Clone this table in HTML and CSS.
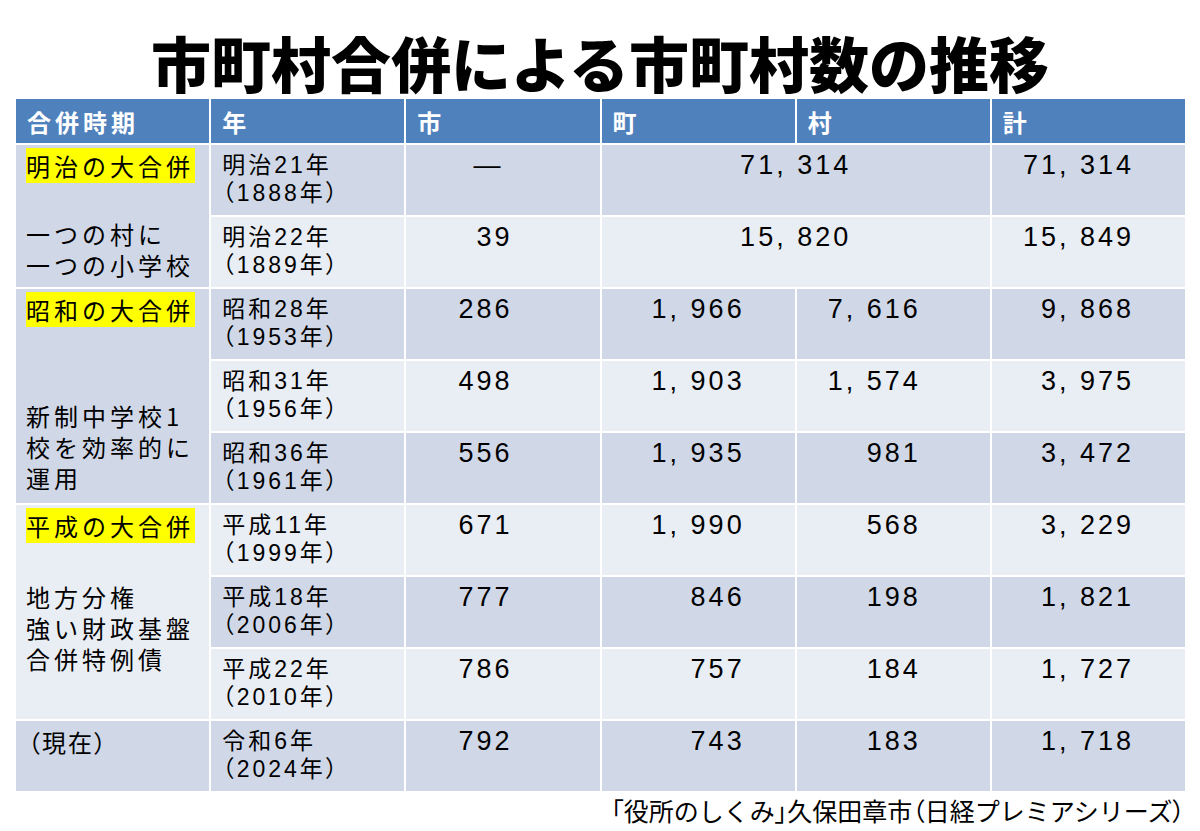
FILE: index.html
```html
<!DOCTYPE html>
<html lang="ja">
<head>
<meta charset="utf-8">
<title>市町村合併による市町村数の推移</title>
<link rel="stylesheet" href="styles.css">
</head>
<body>
<h1 class="title">市町村合併による市町村数の推移</h1>
<div class="table">
  <div class="th">合併時期</div>
  <div class="th">年</div>
  <div class="th">市</div>
  <div class="th">町</div>
  <div class="th">村</div>
  <div class="th">計</div>

  <div class="period dk span2"><span class="hl">明治の大合併</span><div class="desc d1">一つの村に<br>一つの小学校</div></div>
  <div class="year dk">明治21年<br>（1888年）</div>
  <div class="num c3 dk dash">—</div>
  <div class="num merged dk">71, 314</div>
  <div class="num c6 dk">71, 314</div>

  <div class="year lt">明治22年<br>（1889年）</div>
  <div class="num c3 lt">39</div>
  <div class="num merged lt">15, 820</div>
  <div class="num c6 lt">15, 849</div>

  <div class="period dk span3"><span class="hl">昭和の大合併</span><div class="desc d2">新制中学校1<br>校を効率的に<br>運用</div></div>
  <div class="year dk">昭和28年<br>（1953年）</div>
  <div class="num c3 dk">286</div>
  <div class="num c4 dk">1, 966</div>
  <div class="num c5 dk">7, 616</div>
  <div class="num c6 dk">9, 868</div>

  <div class="year lt">昭和31年<br>（1956年）</div>
  <div class="num c3 lt">498</div>
  <div class="num c4 lt">1, 903</div>
  <div class="num c5 lt">1, 574</div>
  <div class="num c6 lt">3, 975</div>

  <div class="year dk">昭和36年<br>（1961年）</div>
  <div class="num c3 dk">556</div>
  <div class="num c4 dk">1, 935</div>
  <div class="num c5 dk">981</div>
  <div class="num c6 dk">3, 472</div>

  <div class="period lt span3"><span class="hl">平成の大合併</span><div class="desc d3">地方分権<br>強い財政基盤<br>合併特例債</div></div>
  <div class="year lt">平成11年<br>（1999年）</div>
  <div class="num c3 lt">671</div>
  <div class="num c4 lt">1, 990</div>
  <div class="num c5 lt">568</div>
  <div class="num c6 lt">3, 229</div>

  <div class="year dk">平成18年<br>（2006年）</div>
  <div class="num c3 dk">777</div>
  <div class="num c4 dk">846</div>
  <div class="num c5 dk">198</div>
  <div class="num c6 dk">1, 821</div>

  <div class="year lt">平成22年<br>（2010年）</div>
  <div class="num c3 lt">786</div>
  <div class="num c4 lt">757</div>
  <div class="num c5 lt">184</div>
  <div class="num c6 lt">1, 727</div>

  <div class="period dk now">（現在）</div>
  <div class="year dk">令和6年<br>（2024年）</div>
  <div class="num c3 dk">792</div>
  <div class="num c4 dk">743</div>
  <div class="num c5 dk">183</div>
  <div class="num c6 dk">1, 718</div>
</div>
<p class="source"><span class="p">「</span>役所のしくみ<span class="p">」</span>久保田章市<span class="p">（</span>日経プレミアシリーズ<span class="p">）</span></p>
</body>
</html>
```

FILE: styles.css
```css
html, body {
  margin: 0;
  padding: 0;
  background: #ffffff;
}

body {
  width: 1200px;
  height: 831px;
  overflow: hidden;
  color: #000;
  font-family: "Liberation Sans", "Noto Sans CJK JP", sans-serif;
}

.title {
  margin: 0;
  padding-top: 32px;
  height: 60px;
  line-height: 60px;
  margin-bottom: 7px;
  text-align: center;
  font-family: "Noto Sans CJK JP", sans-serif;
  font-weight: 900;
  font-size: 60px;
  letter-spacing: 0;
  color: #000;
}

.table {
  margin-left: 16px;
  width: 1169px;
  display: grid;
  grid-template-columns: repeat(6, 1fr);
  grid-template-rows: 44px repeat(9, 70px);
  column-gap: 2px;
  row-gap: 2px;
}

.th {
  background: #4f81bd;
  color: #fff;
  font-family: "Noto Sans CJK JP", sans-serif;
  font-weight: 700;
  font-size: 24px;
  letter-spacing: 4px;
  padding-left: 11px;
  display: flex;
  align-items: center;
}

.dk { background: #d0d8e8; }
.lt { background: #e9edf4; }

.span2 { grid-row: span 2; }
.span3 { grid-row: span 3; }

.period {
  padding: 5px 0 0 10px;
  font-family: "Noto Sans CJK JP", sans-serif;
  font-size: 24px;
  letter-spacing: 4px;
  line-height: 31px;
}

.hl {
  background: #ffff00;
  padding-right: 1px;
}

.desc { line-height: 31px; }
.d1 { margin-top: 37px; }
.d2 { margin-top: 75px; }
.d3 { margin-top: 40px; }

.now {
  padding-left: 12px;
  letter-spacing: 2px;
  font-feature-settings: "palt";
}

.year {
  padding: 6px 0 0 11px;
  font-size: 23px;
  line-height: 28px;
  letter-spacing: 3px;
  font-feature-settings: "palt";
}

.num {
  padding-top: 6px;
  font-size: 27px;
  line-height: 28px;
  letter-spacing: 3px;
  text-align: right;
}

.c3 { padding-right: 87px; }
.dash { padding-right: 96px; }
.c4 { padding-right: 50px; }
.c5 { padding-right: 69px; }
.c6 { padding-right: 51px; }

.merged {
  grid-column: span 2;
  text-align: center;
}

.source {
  margin: 5px 15px 0 0;
  text-align: right;
  font-family: "Noto Sans CJK JP", sans-serif;
  font-size: 25px;
  line-height: 28px;
}

.p {
  font-feature-settings: "palt";
}
```
